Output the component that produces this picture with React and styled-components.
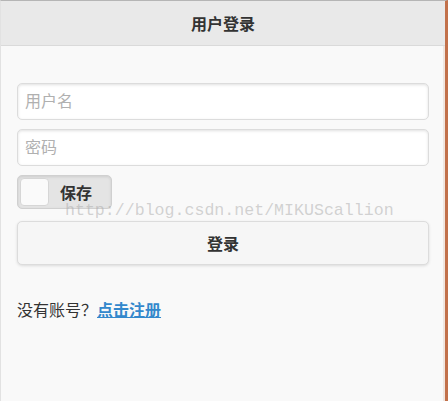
import React from "react";
import styled, { createGlobalStyle } from "styled-components";

const GlobalStyle = createGlobalStyle`
  html, body {
    margin: 0;
    padding: 0;
    background: #f9f9f9;
  }
  body {
    font-family: "Liberation Sans", "Noto Sans CJK SC", sans-serif;
    color: #333;
  }
`;

const Page = styled.div`
  position: relative;
  width: 448px;
  height: 401px;
  box-sizing: border-box;
  background: #f9f9f9;
  border-left: 1px solid #e2e2e2;
  border-top: 1px solid #b5b5b5;
  border-right: 3px solid #c2714b;
  box-shadow: inset -2px 0 0 #f0e6e0;
  overflow: hidden;
`;

const Header = styled.header`
  height: 44px;
  background: #e9e9e9;
  border-bottom: 1px solid #dadada;
  display: flex;
  align-items: center;
  justify-content: center;
  font-size: 16px;
  font-weight: bold;
  color: #333;
`;

const Content = styled.div`
  padding: 37px 16px 0 16px;
  display: flex;
  flex-direction: column;
`;

const Field = styled.input`
  box-sizing: border-box;
  width: 412px;
  height: 37px;
  margin-bottom: 9px;
  padding: 0 7px;
  border: 1px solid #dcdcdc;
  border-radius: 5px;
  background: #fff;
  box-shadow: inset 0 1px 3px rgba(0, 0, 0, 0.12);
  font-family: "Liberation Sans", "Noto Sans CJK SC", sans-serif;
  font-size: 16px;
  color: #333;
  outline: none;
  &::placeholder {
    color: #b0b0b0;
  }
`;

const Toggle = styled.div`
  box-sizing: border-box;
  width: 95px;
  height: 34px;
  display: flex;
  align-items: center;
  border: 1px solid #d0d0d0;
  border-radius: 5px;
  background: #e4e4e4;
  box-shadow: inset 0 1px 3px rgba(0, 0, 0, 0.1);
  padding: 2px;
  gap: 11px;
`;

const Knob = styled.span`
  width: 29px;
  height: 28px;
  border-radius: 4px;
  background: #fafafa;
  border: 1px solid #d6d6d6;
  box-sizing: border-box;
`;

const ToggleLabel = styled.span`
  font-size: 16px;
  font-weight: bold;
  color: #333;
`;

const SubmitButton = styled.button`
  box-sizing: border-box;
  width: 412px;
  height: 44px;
  margin-top: 12px;
  border: 1px solid #dcdcdc;
  border-radius: 5px;
  background: #f6f6f6;
  box-shadow: 0 1px 3px rgba(0, 0, 0, 0.12);
  font-family: "Liberation Sans", "Noto Sans CJK SC", sans-serif;
  font-size: 16px;
  font-weight: bold;
  color: #333;
`;

const Register = styled.p`
  margin: 32px 0 0 0;
  font-size: 16px;
  color: #333;
`;

const RegisterLink = styled.a`
  color: #3388cc;
  font-weight: bold;
  text-decoration: underline;
`;

const Watermark = styled.div`
  position: absolute;
  left: 64px;
  top: 200px;
  font-family: "Liberation Mono", monospace;
  font-size: 16.6px;
  color: rgba(170, 170, 170, 0.5);
  pointer-events: none;
  white-space: nowrap;
`;

export default function App() {
  return (
    <>
      <GlobalStyle />
      <Page>
        <Header>用户登录</Header>
        <Content>
          <Field type="text" placeholder="用户名" />
          <Field type="password" placeholder="密码" />
          <Toggle>
            <Knob />
            <ToggleLabel>保存</ToggleLabel>
          </Toggle>
          <SubmitButton>登录</SubmitButton>
          <Register>
            没有账号？<RegisterLink href="#">点击注册</RegisterLink>
          </Register>
        </Content>
        <Watermark>http://blog.csdn.net/MIKUScallion</Watermark>
      </Page>
    </>
  );
}
